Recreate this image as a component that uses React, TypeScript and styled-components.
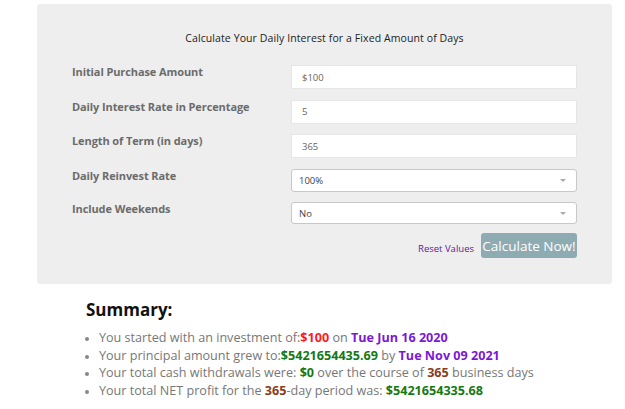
import React from "react";
import styled, { createGlobalStyle } from "styled-components";

const Global = createGlobalStyle`
  html, body { margin: 0; padding: 0; background: #fff; }
  body { font-family: "Open Sans", "Liberation Sans", sans-serif; }
`;

const Page = styled.div`
  padding: 4px 0 0 37px;
  width: 575px;
`;

const Panel = styled.div`
  background: #eeeeee;
  border-radius: 3px;
  padding: 27px 35px 26px 35px;
  height: 280px;
  box-sizing: border-box;
`;

const Title = styled.div`
  text-align: center;
  font-size: 10.5px;
  color: #222;
  margin-bottom: 20px;
  letter-spacing: 0.1px;
`;

const Form = styled.div`
  display: grid;
  grid-template-columns: 219px 286px;
  grid-template-rows: 24px 24px 24px 23px 22px;
  row-gap: 10.5px;
`;

const Label = styled.div`
  font-size: 11px;
  font-weight: 700;
  color: #6b6b6b;
  margin-top: -1px;
  letter-spacing: -0.1px;
`;

const Input = styled.div`
  box-sizing: border-box;
  background: #fff;
  border: 1px solid #e6e6e6;
  font-size: 9.5px;
  color: #666;
  padding: 0 10px;
  display: flex;
  align-items: center;
`;

const Select = styled.div`
  box-sizing: border-box;
  background: #fff;
  border: 1px solid #c8c8c8;
  border-radius: 3px;
  font-size: 9.5px;
  color: #444;
  padding: 0 7px;
  display: flex;
  align-items: center;
  justify-content: space-between;
`;

const Caret = styled.span`
  width: 0;
  height: 0;
  border-left: 3px solid transparent;
  border-right: 3px solid transparent;
  border-top: 3px solid #aaa;
  margin-right: 3px;
`;

const Actions = styled.div`
  display: flex;
  justify-content: flex-end;
  align-items: flex-end;
  gap: 7px;
  margin-top: 9px;
`;

const Reset = styled.a`
  font-size: 9.5px;
  color: #5b1b9e;
  text-decoration: none;
  padding-bottom: 3px;
`;

const Button = styled.button`
  width: 96px;
  height: 25px;
  border: none;
  border-radius: 3px;
  background: #8fabb2;
  color: #fff;
  font-family: "Open Sans", "Liberation Sans", sans-serif;
  font-size: 13.5px;
  padding: 0;
`;

const Summary = styled.div`
  padding: 14px 0 0 86px;
`;

const Heading = styled.h2`
  margin: 0 0 8px 0;
  font-size: 17px;
  font-weight: 700;
  color: #111;
`;

const List = styled.ul`
  margin: 0;
  padding: 0 0 0 13px;
  font-size: 12.6px;
  color: #777;
  line-height: 17.7px;
  li::marker { color: #888; font-size: 10px; }
`;

const Em = styled.b<{ $c: string }>`
  color: ${(p) => p.$c};
  font-weight: 700;
`;

const RED = "#ff1a1a";
const GREEN = "#137a13";
const PURPLE = "#7a17d6";
const BROWN = "#8b3d1a";

export default function App() {
  return (
    <>
      <Global />
      <Page>
        <Panel>
          <Title>Calculate Your Daily Interest for a Fixed Amount of Days</Title>
          <Form>
            <Label>Initial Purchase Amount</Label>
            <Input>$100</Input>
            <Label>Daily Interest Rate in Percentage</Label>
            <Input>5</Input>
            <Label>Length of Term (in days)</Label>
            <Input>365</Input>
            <Label>Daily Reinvest Rate</Label>
            <Select>
              100%
              <Caret />
            </Select>
            <Label>Include Weekends</Label>
            <Select>
              No
              <Caret />
            </Select>
          </Form>
          <Actions>
            <Reset href="#">Reset Values</Reset>
            <Button>Calculate Now!</Button>
          </Actions>
        </Panel>
      </Page>
      <Summary>
        <Heading>Summary:</Heading>
        <List>
          <li>
            You started with an investment of:<Em $c={RED}>$100</Em> on{" "}
            <Em $c={PURPLE}>Tue Jun 16 2020</Em>
          </li>
          <li>
            Your principal amount grew to:<Em $c={GREEN}>$5421654435.69</Em> by{" "}
            <Em $c={PURPLE}>Tue Nov 09 2021</Em>
          </li>
          <li>
            Your total cash withdrawals were: <Em $c={GREEN}>$0</Em> over the course of{" "}
            <Em $c={BROWN}>365</Em> business days
          </li>
          <li>
            Your total NET profit for the <Em $c={BROWN}>365</Em>-day period was:{" "}
            <Em $c={GREEN}>$5421654335.68</Em>
          </li>
        </List>
      </Summary>
    </>
  );
}
